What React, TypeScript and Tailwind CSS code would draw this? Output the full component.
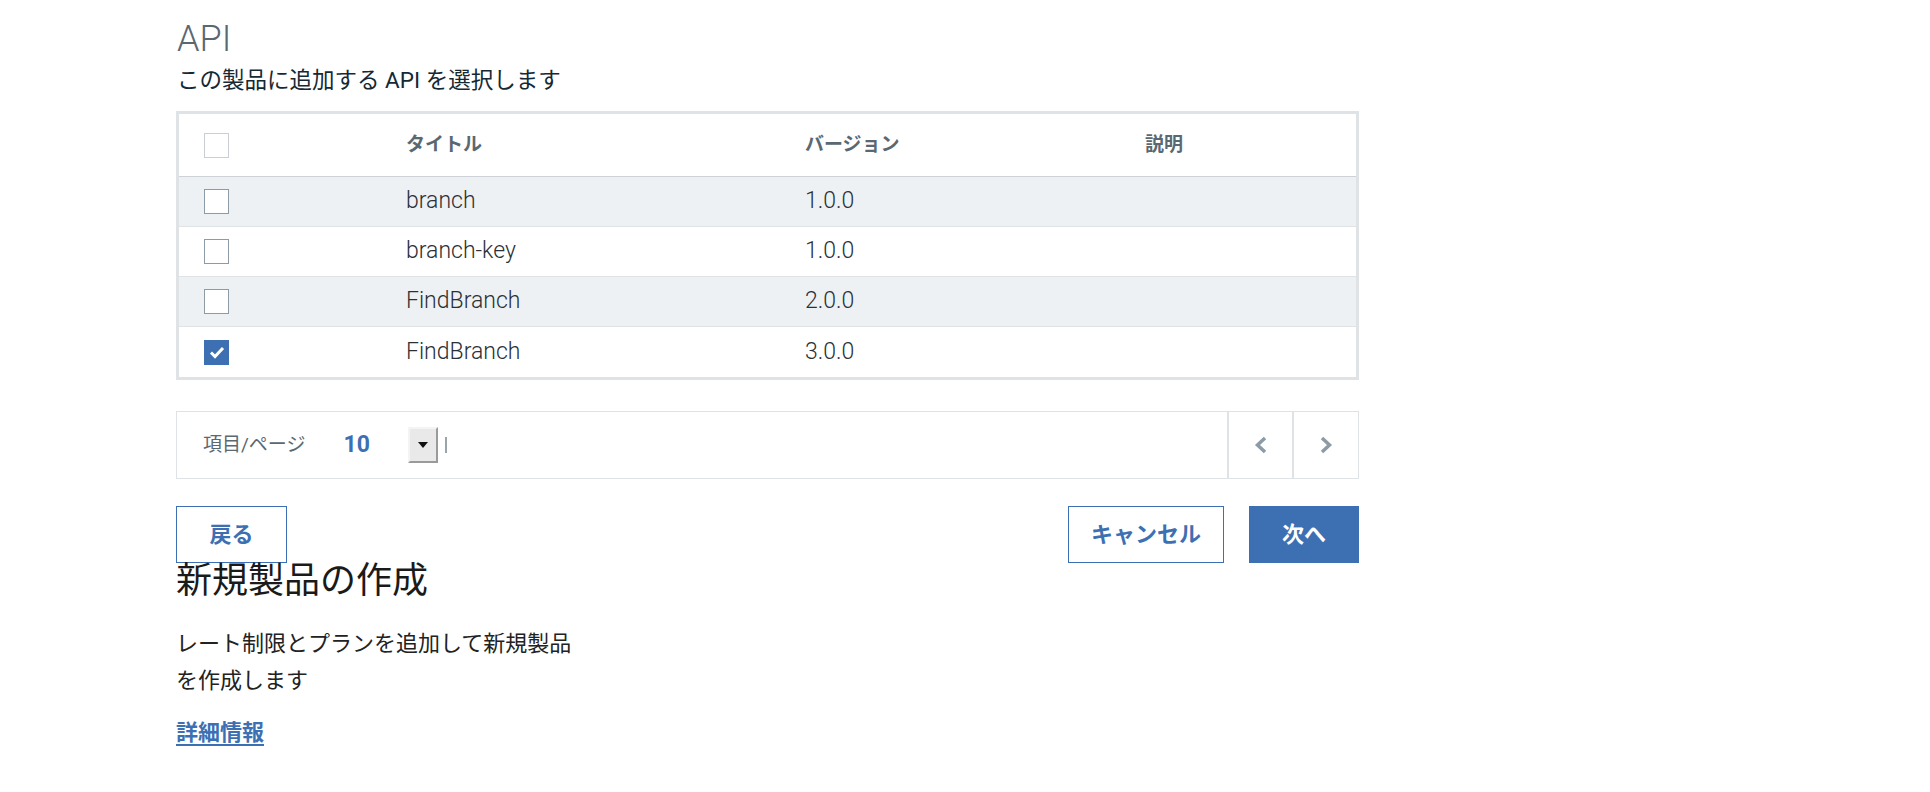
import type { ReactNode } from "react";

const rows = [
  { title: "branch", version: "1.0.0", checked: false },
  { title: "branch-key", version: "1.0.0", checked: false },
  { title: "FindBranch", version: "2.0.0", checked: false },
  { title: "FindBranch", version: "3.0.0", checked: true },
];

const cols = "grid grid-cols-[227px_399px_340px_1fr] items-center";

export default function App() {
  return (
    <div className="min-h-screen bg-white font-['Roboto','Noto_Sans_CJK_JP',sans-serif]">
      <div className="ml-[176px] w-[1183px] pt-[18px]">
        <h1 className="pl-px text-[36px] font-light leading-[42px] text-[#5a6872]">API</h1>
        <p className="mt-[6px] pl-px text-[22.5px] leading-[28px] text-[#152935]">
          この製品に追加する API を選択します
        </p>

        <div className="mt-[17px] border-[3px] border-[#dfe3e6]">
          <div className={`${cols} h-[63px] border-b border-[#ccd2d7]`}>
            <div className="pl-[25px]">
              <Checkbox muted />
            </div>
            <HeaderCell>タイトル</HeaderCell>
            <HeaderCell>バージョン</HeaderCell>
            <HeaderCell>説明</HeaderCell>
          </div>
          {rows.map((r, i) => (
            <div
              key={i}
              className={`${cols} ${i === rows.length - 1 ? "h-[50px]" : "h-[50px] border-b border-[#dfe3e6]"} ${
                i % 2 === 0 ? "bg-[#eef1f4]" : "bg-white"
              }`}
            >
              <div className="pl-[25px]">
                <Checkbox checked={r.checked} />
              </div>
              <div className="text-[23px] font-light text-[#2a3035]">{r.title}</div>
              <div className="text-[23px] font-light text-[#2a3035]">{r.version}</div>
              <div />
            </div>
          ))}
        </div>

        <div className="mt-[31px] flex h-[68px] items-center border border-[#dfe3e6]">
          <span className="ml-[26px] text-[19px] text-[#5a6872]">項目/ページ</span>
          <span className="ml-[38px] text-[23px] font-bold text-[#3d70b2]">10</span>
          <span className="ml-[38px] flex h-[36px] w-[30px] items-center justify-center border-2 border-t-[#f4f4f4] border-l-[#f4f4f4] border-r-[#9a9a9a] border-b-[#9a9a9a] bg-[#e9e9e9]">
            <svg width="10" height="6" viewBox="0 0 10 6">
              <polygon points="0,0 10,0 5,6" fill="#111" />
            </svg>
          </span>
          <span className="ml-[7px] h-[16px] w-[2px] bg-[#9aa4ab]" />
          <div className="ml-auto flex h-full">
            <PagerButton>
              <polyline points="11,2 3.5,9 11,16" />
            </PagerButton>
            <PagerButton>
              <polyline points="3,2 10.5,9 3,16" />
            </PagerButton>
          </div>
        </div>

        <div className="mt-[27px] flex items-start justify-between">
          <button className="h-[57px] w-[111px] border border-[#3d70b2] text-[22px] font-bold text-[#3d70b2]">
            戻る
          </button>
          <div className="flex gap-[25px]">
            <button className="h-[57px] w-[156px] border border-[#3d70b2] text-[22px] font-bold text-[#3d70b2]">
              キャンセル
            </button>
            <button className="h-[57px] w-[110px] bg-[#3d70b2] text-[22px] font-bold text-white">
              次へ
            </button>
          </div>
        </div>

        <h2 className="-mt-[3px] text-[36px] font-normal leading-[43px] text-[#1a1a1a]">新規製品の作成</h2>
        <p className="mt-[22px] w-[410px] text-[22px] leading-[37px] text-[#222]">
          レート制限とプランを追加して新規製品を作成します
        </p>
        <a
          href="#"
          className="mt-[19px] inline-block text-[22px] font-semibold leading-[30px] text-[#3d70b2] underline underline-offset-4"
        >
          詳細情報
        </a>
      </div>
    </div>
  );
}

function HeaderCell({ children }: { children: ReactNode }) {
  return <div className="text-[19px] font-semibold text-[#5a6872]">{children}</div>;
}

function Checkbox({ checked, muted }: { checked?: boolean; muted?: boolean }) {
  if (checked) {
    return (
      <span className="flex h-[25px] w-[25px] items-center justify-center bg-[#3d70b2]">
        <svg width="16" height="13" viewBox="0 0 16 13" fill="none">
          <polyline points="2,6.5 6,10.5 14,2" stroke="white" strokeWidth="3" />
        </svg>
      </span>
    );
  }
  return (
    <span
      className={`block h-[25px] w-[25px] border bg-white ${muted ? "border-[#c9cfd4]" : "border-[#8c9ba5]"}`}
    />
  );
}

function PagerButton({ children }: { children: ReactNode }) {
  return (
    <button className="flex h-full w-[65px] items-center justify-center border-l-2 border-[#dfe3e6] last:w-[66px]">
      <svg width="14" height="18" viewBox="0 0 14 18" fill="none" stroke="#8c9ba5" strokeWidth="3.5">
        {children}
      </svg>
    </button>
  );
}
